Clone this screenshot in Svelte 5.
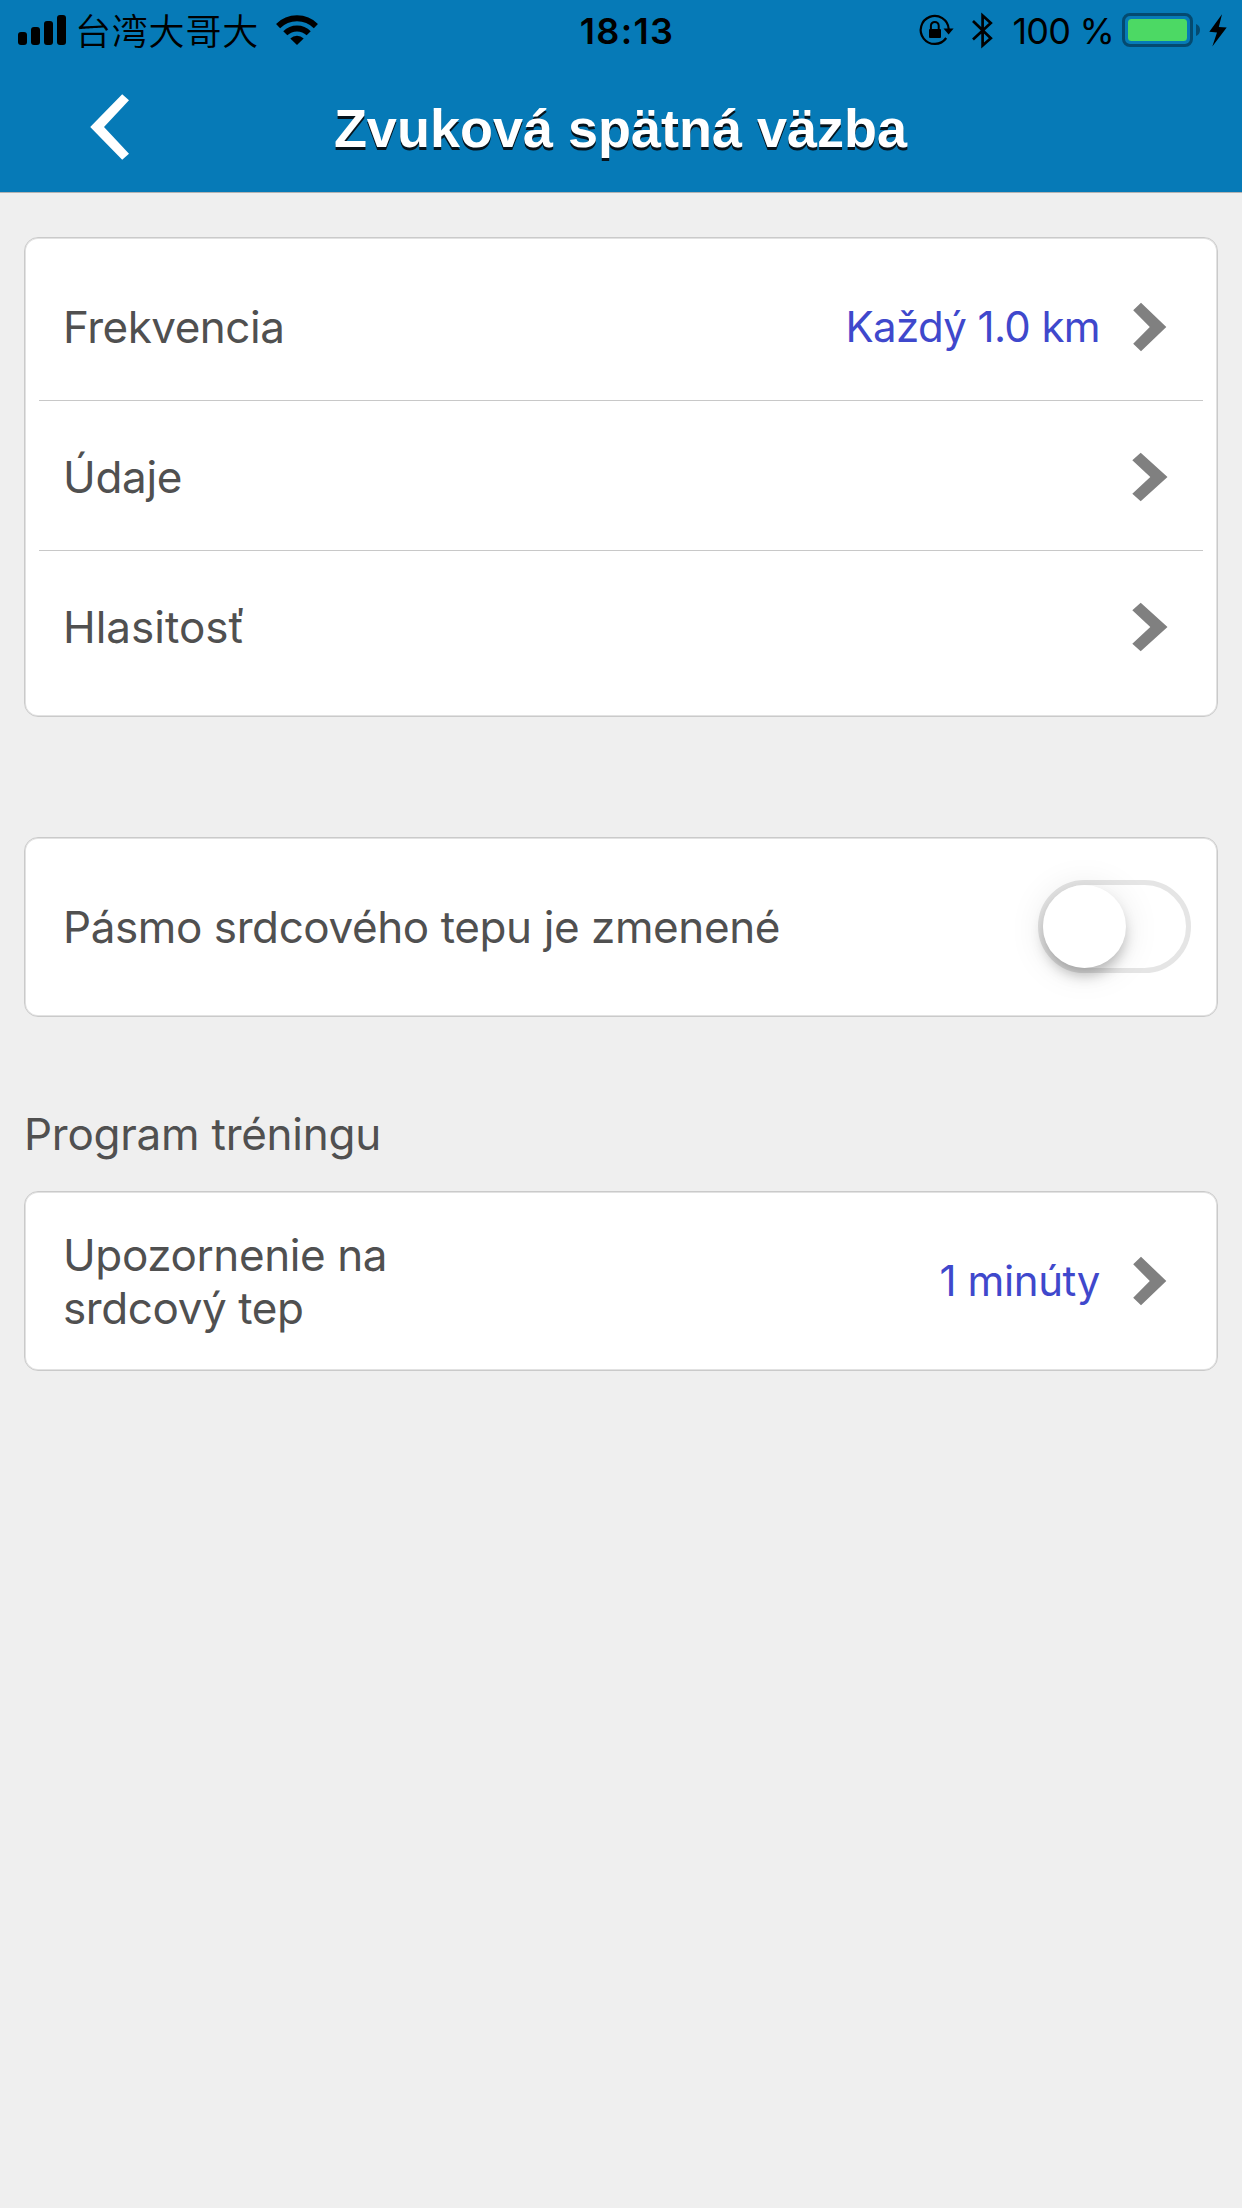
<script>
  let zoneAlert = $state(false);
  const rows = [
    { id: 'frequency', label: 'Frekvencia', value: 'Každý 1.0 km' },
    { id: 'data', label: 'Údaje' },
    { id: 'volume', label: 'Hlasitosť' }
  ];
</script>

{#snippet narrowChevron()}
  <svg class="chevron" width="36" height="50" viewBox="0 0 36 50">
    <path d="M9 0.700 L34.300 25 L9 49.300 L1.200 41.700 L17.800 25 L1.200 8.300 Z" fill="#808080" />
  </svg>
{/snippet}

{#snippet wideChevron()}
  <svg class="chevron" width="36" height="50" viewBox="0 0 36 50">
    <path d="M8.7 0.700 L35.500 25 L8.700 49.300 L0.300 41.700 L18.300 25 L0.300 8.300 Z" fill="#808080" />
  </svg>
{/snippet}

<div class="screen">
  <header>
    <div class="status">
      <div class="left">
        <svg width="50" height="32" viewBox="0 0 50 32">
          <rect x="0" y="18" width="9" height="13" rx="3" />
          <rect x="13" y="13" width="9" height="18" rx="3" />
          <rect x="26" y="7" width="9" height="24" rx="3" />
          <rect x="39" y="1" width="9" height="30" rx="3" />
        </svg>
        <span class="carrier">台湾大哥大</span>
        <svg class="wifi" width="44" height="32" viewBox="0 0 44 32">
          <g fill="none" stroke="#000" stroke-width="5.8">
            <path d="M3.1 12.1 A26.7 26.7 0 0 1 40.9 12.1" />
            <path d="M10.3 19.3 A16.6 16.6 0 0 1 33.7 19.3" />
          </g>
          <path d="M22 31 L15.3 24.4 A9.5 9.5 0 0 1 28.7 24.4 Z" />
        </svg>
      </div>
      <div class="time">18:13</div>
      <div class="right">
        <svg width="38" height="36" viewBox="0 0 38 36">
          <path d="M30.7 17 A14 14 0 1 0 28.2 26" fill="none" stroke="#000" stroke-width="2.2" />
          <path d="M25.5 16.5 H35.6 L30.6 22.6 Z" />
          <rect x="11" y="17" width="12" height="9" rx="1" />
          <path d="M12.9 17.5 V13.8 a3.9 3.9 0 0 1 7.8 0 V17.5" fill="none" stroke="#000" stroke-width="2" />
        </svg>
        <svg class="bt" width="26" height="40" viewBox="0 0 26 40">
          <path d="M3 11 L20.800 28.3 L12.6 35.500 V5.500 L20.800 13 L3 29.5" fill="none" stroke="#000" stroke-width="2.7" />
        </svg>
        <span class="percent">100 %</span>
        <svg class="battery" width="79" height="36" viewBox="0 0 79 36">
          <rect x="1.5" y="2.5" width="68" height="31" rx="6.5" fill="none" stroke="#044a70" stroke-width="3" />
          <rect x="6" y="7" width="59" height="22" rx="3.5" fill="#4cd964" />
          <path d="M74 12 Q78 13.5 78 18 Q78 22.500 74 24 Z" fill="#044a70" />
        </svg>
        <svg class="bolt" width="22" height="36" viewBox="0 0 22 36">
          <path d="M15 2.300 L2.300 19.800 L10 20.500 L5.300 34.500 L19.700 15.400 L11.800 15 Z" />
        </svg>
      </div>
    </div>
    <div class="nav">
      <button class="back" aria-label="Späť">
        <svg width="40" height="66" viewBox="0 0 40 66">
          <path d="M32.200 0.300 L39 6.200 L14 33 L39 59.800 L32.200 65.700 L0.200 33 Z" fill="#fff" />
        </svg>
      </button>
      <h1>Zvuková spätná väzba</h1>
    </div>
  </header>

  <main>
    <section class="card list">
      {#each rows as row (row.id)}
        <div class="row">
          <span class="label {row.id}">{row.label}</span>
          {#if row.value}
            <span class="value every">{row.value}</span>
            {@render narrowChevron()}
          {:else}
            {@render wideChevron()}
          {/if}
        </div>
      {/each}
    </section>

    <section class="card single zone-card">
      <span class="label zone">Pásmo srdcového tepu je zmenené</span>
      <button
        class="switch"
        class:on={zoneAlert}
        role="switch"
        aria-checked={zoneAlert}
        aria-label="Pásmo srdcového tepu je zmenené"
        onclick={() => (zoneAlert = !zoneAlert)}
      ><span class="knob"></span></button>
    </section>

    <h2>Program tréningu</h2>

    <section class="card single">
      <span class="label alert">Upozornenie na<br />srdcový tep</span>
      <span class="value minute">1 minúty</span>
      {@render narrowChevron()}
    </section>
  </main>
</div>

<style>
  :global(body) {
    background: #efefef;
  }
  .screen {
    width: 1242px;
    height: 2208px;
    background: #efefef;
    font-family: Inter, 'Noto Sans CJK TC', sans-serif;
    color: #505050;
    overflow: hidden;
  }
  svg {
    display: block;
    flex: none;
  }
  button {
    appearance: none;
    background: none;
    border: 0;
    padding: 0;
    margin: 0;
  }
  header {
    box-sizing: border-box;
    height: 193px;
    background: #067ab7;
    border-bottom: 1px solid #b3b3b3;
  }
  .status {
    height: 60px;
    padding: 0 13px 0 18px;
    display: grid;
    grid-template-columns: 1fr auto 1fr;
    align-items: center;
    color: #000;
    font-size: 36px;
    line-height: 44px;
  }
  .left,
  .right {
    display: flex;
    align-items: center;
  }
  .right {
    justify-content: flex-end;
  }
  .carrier {
    font-family: 'Noto Sans CJK TC', sans-serif;
    font-weight: 350;
    font-size: 36px;
    line-height: 42px;
    letter-spacing: 0.8px;
    margin: 0 0 2px 7px;
    white-space: nowrap;
  }
  .wifi {
    margin-left: 16px;
  }
  .time {
    font-weight: 600;
    letter-spacing: 1.3px;
    padding: 2px 0 0 7px;
  }
  .bt {
    margin-left: 14px;
  }
  .percent {
    width: 104px;
    margin-left: 14px;
    padding-top: 2px;
    letter-spacing: -0.8px;
    text-align: right;
    white-space: nowrap;
  }
  .battery {
    margin-left: 8px;
  }
  .bolt {
    margin-left: 6px;
  }
  .nav {
    height: 132px;
    display: grid;
    grid-template-columns: 200px 1fr 200px;
    align-items: center;
  }
  .back {
    padding: 2px 0 0 90px;
  }
  h1 {
    margin: 0;
    padding: 3px 1px 0 0;
    text-align: center;
    font: bold 54px/62px 'Liberation Sans', sans-serif;
    color: #fff;
    text-shadow: 0 3px 0 #06141d;
    white-space: nowrap;
  }
  main {
    padding: 44px 24px 0;
  }
  .card {
    box-sizing: border-box;
    background: #fff;
    border: 1px solid #cacaca;
    box-shadow: inset 0 0 0 1px #e2e2e2;
    border-radius: 14px;
  }
  .list {
    height: 480px;
    padding: 13px 14px 0;
  }
  .row {
    box-sizing: border-box;
    height: 150px;
    padding: 3px 35px 0 24px;
    display: flex;
    align-items: center;
    border-bottom: 1px solid #c8c8c8;
  }
  .row:last-child {
    border-bottom-color: transparent;
  }
  .label {
    flex: 1;
    font-size: 44px;
    line-height: 53px;
    white-space: nowrap;
  }
  .frequency {
    letter-spacing: -0.5px;
  }
  .data {
    letter-spacing: -0.3px;
  }
  .zone {
    letter-spacing: -0.41px;
  }
  .alert {
    letter-spacing: -0.4px;
    padding-top: 2px;
  }
  .value {
    font-size: 42px;
    line-height: 52px;
    color: #3f48cc;
    white-space: nowrap;
  }
  .every {
    letter-spacing: -0.62px;
  }
  .minute {
    letter-spacing: -0.4px;
  }
  .chevron {
    margin-left: 32px;
  }
  .single {
    height: 180px;
    padding: 0 49px 0 38px;
    display: flex;
    align-items: center;
  }
  .zone-card {
    margin-top: 120px;
    padding-right: 26px;
  }
  .switch {
    box-sizing: border-box;
    width: 153px;
    height: 93px;
    margin-bottom: 1px;
    border: 5px solid #e5e5e5;
    border-radius: 47px;
    display: flex;
  }
  .switch.on {
    justify-content: flex-end;
    background: #4cd964;
    border-color: #4cd964;
  }
  .knob {
    width: 83px;
    height: 83px;
    border-radius: 50%;
    background: #fff;
    box-shadow:
      0 9px 14px -2px rgba(0, 0, 0, 0.26),
      0 3px 36px rgba(0, 0, 0, 0.1);
  }
  h2 {
    margin: 90px 0 30px 0;
    font-weight: 400;
    font-size: 44px;
    letter-spacing: -0.25px;
    line-height: 54px;
    white-space: nowrap;
  }
</style>
